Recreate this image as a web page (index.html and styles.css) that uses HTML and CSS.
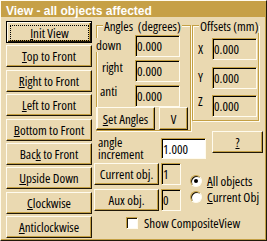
FILE: index.html
```html
<!DOCTYPE html>
<html>
<head>
<meta charset="utf-8">
<link rel="stylesheet" href="styles.css">
</head>
<body>
<div class="window">
  <div class="titlebar">View - all objects affected</div>
  <div class="content">
    <div class="views">
      <div class="btn default"><span class="focus"><u>I</u>nit View</span></div>
      <div class="btn"><span><u>T</u>op to Front</span></div>
      <div class="btn"><span><u>R</u>ight to Front</span></div>
      <div class="btn"><span><u>L</u>eft to Front</span></div>
      <div class="btn"><span><u>B</u>ottom to Front</span></div>
      <div class="btn"><span>Bac<u>k</u> to Front</span></div>
      <div class="btn"><span><u>U</u>pside Down</span></div>
      <div class="btn"><span><u>C</u>lockwise</span></div>
      <div class="btn"><span><u>A</u>nticlockwise</span></div>
    </div>
    <div class="panel">
      <div class="groups">
        <div class="group angles">
          <div class="group-title">Angles&nbsp; (degrees)</div>
          <div class="field-grid angles-grid">
            <span class="lbl lbl-down">down</span><span class="field">0.000</span>
            <span class="lbl lbl-right">right</span><span class="field">0.000</span>
            <span class="lbl lbl-anti">anti</span><span class="field">0.000</span>
          </div>
          <div class="angle-btns">
            <div class="btn btn-set"><span><u>S</u>et Angles</span></div>
            <div class="btn btn-v"><span>V</span></div>
          </div>
        </div>
        <div class="group offsets">
          <div class="group-title">Offsets (mm)</div>
          <div class="field-grid offsets-grid">
            <span class="lbl lbl-x">X</span><span class="field">0.000</span>
            <span class="lbl lbl-y">Y</span><span class="field">0.000</span>
            <span class="lbl lbl-z">Z</span><span class="field">0.000</span>
          </div>
        </div>
      </div>
      <div class="incr-row">
        <div class="incr-label"><span class="incr-line">angle</span><span class="incr-line">increment</span></div>
        <div class="field field-white incr-field">1.000</div>
        <div class="btn btn-help"><span><u>?</u></span></div>
      </div>
      <div class="obj-row">
        <div class="btn btn-obj"><span>Current obj.</span></div>
        <div class="field obj-field">1</div>
        <div class="radios">
          <div class="radio-item"><span class="radio checked"></span><span class="radio-text"><u>A</u>ll objects</span></div>
          <div class="radio-item"><span class="radio"></span><span class="radio-text"><u>C</u>urrent Obj</span></div>
        </div>
        <div class="btn btn-obj"><span>Aux obj.</span></div>
        <div class="field obj-field">0</div>
      </div>
      <div class="check-row">
        <span class="checkbox"></span><span class="check-text">Show CompositeView</span>
      </div>
    </div>
  </div>
</div>
</body>
</html>
```
FILE: styles.css
```css
* { box-sizing: border-box; }
body {
  margin: 0;
  background: #ead9b1;
  font-family: "Open Sans", "Liberation Sans", Arial, sans-serif;
  font-stretch: 80%;
  font-weight: 500;
  font-size: 13px;
  color: #000;
}
.window {
  width: 267px;
  height: 241px;
  background: #ead9b1;
  border: 1px solid;
  border-color: #fffbee #201808 #201808 #fffbee;
  box-shadow: inset -1px -1px #c4a044;
  overflow: hidden;
}
.titlebar {
  height: 16px;
  background: #c6a046;
  color: #fff;
  font: bold 12px "Liberation Sans", Arial, sans-serif;
  line-height: 14px;
  padding: 3px 0 0 5px;
  white-space: nowrap;
}
.content {
  display: flex;
  padding: 4px 0 0 5px;
}
.views {
  width: 86px;
  height: 217px;
  display: flex;
  flex-direction: column;
  justify-content: space-between;
}
.btn {
  height: 22px;
  display: flex;
  align-items: center;
  justify-content: center;
  border: 1px solid;
  border-color: #fffbee #201808 #201808 #fffbee;
  box-shadow: inset -1px -1px #c4a044;
  white-space: nowrap;
  line-height: 14px;
}
.btn.default {
  border-color: #000;
  box-shadow: inset 1px 1px #fffbee, inset -1px -1px #201808, inset -2px -2px #c4a044;
  padding: 3px 2px 1px 3px;
}
.focus {
  flex: 1;
  align-self: stretch;
  display: flex;
  align-items: center;
  justify-content: center;
  border: 1px dotted #000;
}
.panel {
  display: flex;
  flex-direction: column;
}
.groups {
  display: flex;
  align-items: flex-start;
  gap: 1px;
  margin: 4px 0 0 4px;
}
.group {
  border: 1px solid #c4a044;
  box-shadow: inset 1px 1px #fffbee, 1px 1px #fffbee;
}
.angles { width: 95px; }
.offsets { width: 67px; padding-bottom: 3px; }
.group-title {
  width: max-content;
  height: 14px;
  line-height: 14px;
  margin: -7px 0 0 6px;
  padding: 0 1px;
  background: #ead9b1;
  white-space: nowrap;
  position: relative;
  z-index: 1;
}
.field-grid {
  display: grid;
  grid-auto-rows: 22px;
}
.angles-grid {
  grid-template-columns: 38px 45px;
  row-gap: 3px;
  margin-top: 2px;
}
.offsets-grid {
  grid-template-columns: 19px 45px;
  row-gap: 6.5px;
  margin-top: 5px;
}
.lbl {
  align-self: start;
  width: max-content;
  line-height: 14px;
  background: #ead9b1;
}
.lbl-down { margin: 3px 0 0 -1px; }
.lbl-right { margin: 0 0 0 5px; }
.lbl-anti { margin: -1px 0 0 3px; }
.lbl-x { margin: 4px 0 0 5px; }
.lbl-y { margin: 3px 0 0 5px; }
.lbl-z { margin: -1px 0 0 5px; }
.field {
  display: flex;
  align-items: center;
  padding-left: 1px;
  border: 1px solid;
  border-color: #c4a044 #fffbee #fffbee #c4a044;
  box-shadow: inset 1px 1px #000;
  line-height: 14px;
  white-space: nowrap;
}
.field-white { background: #fff; }
.angle-btns {
  display: flex;
  gap: 4px;
  margin-left: -1px;
}
.btn-set { width: 59px; height: 23px; }
.btn-v { width: 29px; height: 23px; }
.incr-row {
  display: grid;
  grid-template-columns: 57px 45px 51px;
  column-gap: 6px;
  align-items: start;
  padding-left: 6px;
}
.incr-label {
  display: flex;
  flex-direction: column;
  margin-top: 5px;
}
.incr-line {
  height: 12px;
  line-height: 14px;
  display: flex;
  align-items: center;
}
.incr-field {
  height: 21px;
  margin-top: 7px;
}
.btn-help { height: 22px; }
.obj-row {
  display: grid;
  grid-template-columns: 65px 20px auto;
  grid-template-rows: 22px 22px;
  column-gap: 2px;
  row-gap: 4px;
  margin: 3px 0 0 2px;
}
.btn-obj { height: 22px; }
.obj-field { padding-left: 1px; }
.radios {
  grid-column: 3;
  grid-row: 1 / span 2;
  margin-left: 7px;
  padding-top: 12px;
  display: flex;
  flex-direction: column;
}
.radio-item {
  height: 16px;
  display: flex;
  align-items: flex-start;
  gap: 5px;
  white-space: nowrap;
}
.radio {
  width: 12px;
  height: 12px;
  border-radius: 50%;
  background: #fff;
  border: 1px solid;
  border-color: #c4a044 #fffbee #fffbee #c4a044;
  box-shadow: inset 1px 1px #201808;
  display: flex;
  align-items: center;
  justify-content: center;
  flex: none;
}
.radio.checked::after {
  content: "";
  width: 4px;
  height: 4px;
  border-radius: 50%;
  background: #000;
}
.radio-text {
  height: 12px;
  display: flex;
  align-items: center;
  line-height: 14px;
}
.check-row {
  display: flex;
  align-items: flex-start;
  gap: 6px;
  margin-top: 6px;
  padding-left: 34px;
}
.checkbox {
  width: 12px;
  height: 12px;
  background: #fff;
  border: 1px solid;
  border-color: #c4a044 #fffbee #fffbee #c4a044;
  box-shadow: inset 1px 1px #201808;
  flex: none;
}
.check-text {
  height: 12px;
  display: flex;
  align-items: center;
  line-height: 14px;
}
```
